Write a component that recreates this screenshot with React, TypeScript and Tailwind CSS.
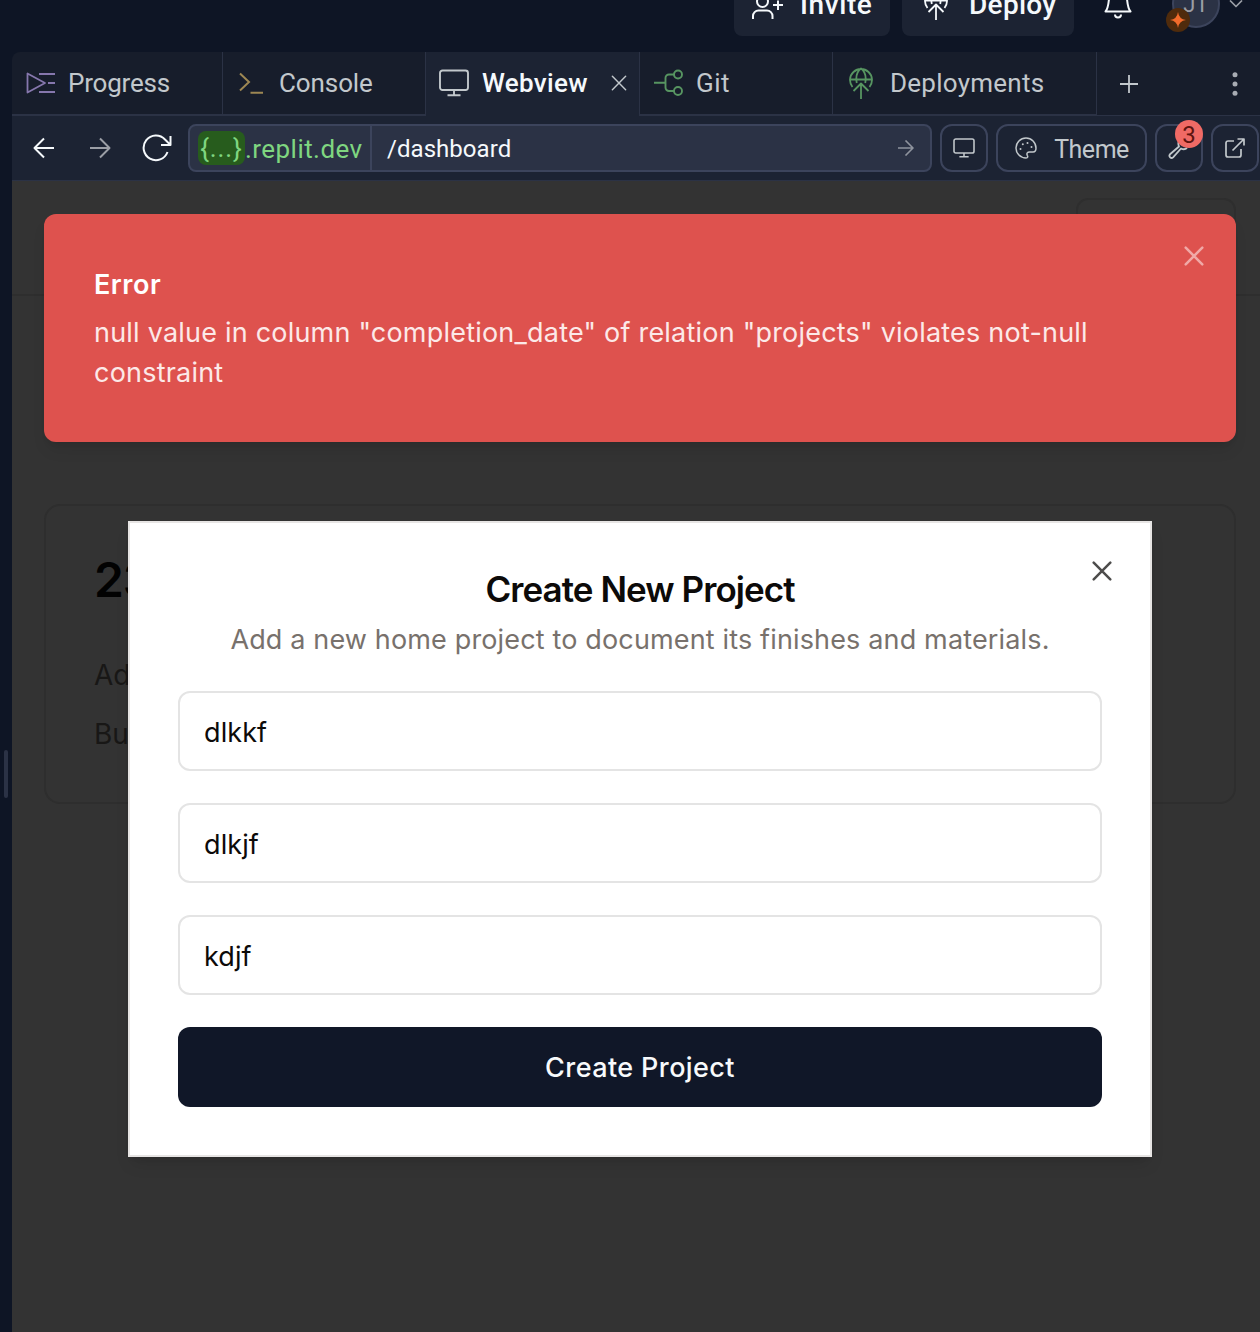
import type { ReactNode } from 'react';

const ui = "font-['Roboto','Liberation_Sans',sans-serif]";

function Svg({ className, box, sw = 2, children }: { className: string; box: string; sw?: number; children: ReactNode }) {
  return (
    <svg className={`shrink-0 ${className}`} viewBox={box} fill="none" stroke="currentColor" strokeWidth={sw} strokeLinejoin="round">
      {children}
    </svg>
  );
}

function DeployIcon({ className }: { className: string }) {
  return (
    <Svg className={className} box="0 0 24 32" sw={1.8}>
      <path d="M3.500 20A11 11 0 1 1 20.500 20M1 12.500h22M7.800 16C6.600 10 8 4.500 12 1.500c4 3 5.400 8.500 4.200 14.500M12 32V17.500M4.500 24l7.500-7.500 7.500 7.500" />
    </Svg>
  );
}

function MonitorIcon({ className, sw }: { className: string; sw?: number }) {
  return (
    <Svg className={className} box="0 0 30 28" sw={sw}>
      <rect x="1" y="1.500" width="28" height="19.500" rx="2.500" />
      <path d="M15 21v5M8.500 26.200h13" />
    </Svg>
  );
}

function Close({ className, sw = 2.5 }: { className: string; sw?: number }) {
  return (
    <Svg className={className} box="0 0 20 20" sw={sw}>
      <path strokeLinecap="round" d="M1.700 1.700l16.600 16.600M18.300 1.700l-16.600 16.600" />
    </Svg>
  );
}

function TopBar() {
  return (
    <header className="flex h-[52px] items-start justify-end overflow-hidden text-[#f5f9fc]">
      <div className="-mt-7 flex h-16 w-[156px] shrink-0 items-center rounded-lg bg-[#1c2333] pt-[2px] pl-[17px] text-[28px] font-medium">
        <Svg className="-mt-[2px] h-[32px] w-[32px]" box="0 0 32 32">
          <circle cx="11.500" cy="13.500" r="5.500" />
          <path d="M2 31v-3a5.500 5.500 0 0 1 5.500-5.500h8.500a5.500 5.500 0 0 1 5.500 5.500V31M27 12.500v9.500M22 17h10" />
        </Svg>
        <span className="ml-[17px] tracking-[0.600px]">Invite</span>
      </div>
      <div className="-mt-7 ml-3 flex h-16 w-[172px] shrink-0 items-center rounded-lg bg-[#1c2333] pt-[2px] pl-[22px] text-[28px] font-medium">
        <DeployIcon className="-mt-[2px] h-[32px] w-[24px]" />
        <span className="ml-[21px] tracking-[0.300px]">Deploy</span>
      </div>
      <Svg className="-mt-[10px] ml-[30px] h-[30px] w-7" box="0 0 28 30">
        <path d="M1.500 21.500C4 19 4.500 14 5 9a9 9 0 0 1 18 0c.5 5 1 10 3.500 12.500zM11 24.500a3 3 0 0 0 6 0" />
      </Svg>
      <div className="relative -mt-5 ml-10 flex size-12 shrink-0 items-center justify-center rounded-full border-2 border-[#3c445c] bg-[#2b3245] text-[22px] text-[#9b9ea6]">
        JT
        <span className="absolute -bottom-[6px] -left-2 flex size-6 items-center justify-center rounded-full bg-[#4f2b0c] text-[#f26b2b]">
          <svg className="size-4" viewBox="0 0 16 16" fill="currentColor">
            <path d="M8 0Q8.900 7.100 16 8Q8.900 8.900 8 16Q7.100 8.900 0 8Q7.100 7.100 8 0Z" />
          </svg>
        </span>
      </div>
      <Svg className="mr-[17px] ml-[9px] h-2 w-[14px]" box="0 0 14 8" sw={1.700}>
        <path d="M1 .5l6 6 6-6" stroke="#9b9ea6" />
      </Svg>
    </header>
  );
}

function TabBar() {
  const tab = 'flex shrink-0 items-center border-r border-[#2b3245] border-b-2 pb-0';
  return (
    <nav className="flex h-16 overflow-hidden rounded-tl-lg bg-[#171d2b] text-[26px] text-[#c2c8cc]">
      <div className={`${tab} w-[211px] pl-[14px]`}>
        <Svg className="h-[22px] w-[29px] text-[#8677ad]" box="0 0 29 22" sw={1.800}>
          <path d="M1.500 1.500v19L19 11zM13 2h16M22 11h7M13 20h16" />
        </Svg>
        <span className="ml-[13px] pt-px tracking-[-0.200px]">Progress</span>
      </div>
      <div className={`${tab} w-[203px] pl-4`}>
        <Svg className="h-[22px] w-6 text-[#9d8753]" box="0 0 24 22">
          <path strokeLinejoin="miter" d="M1 1.500l9 8.500-9 8.500M11.500 20.800H24" />
        </Svg>
        <span className="ml-4 pt-px tracking-[-0.100px]">Console</span>
      </div>
      <div className="flex w-[214px] shrink-0 items-center border-r border-[#2b3245] bg-[#1c2333] pb-0.5 pl-[13px]">
        <MonitorIcon className="h-7 w-[30px] text-[#c2c8cc]" sw={1.900} />
        <span className="ml-[13px] pt-px font-medium tracking-[0.300px] text-[#f5f9fc]">Webview</span>
        <Close className="ml-auto mr-3 size-4" sw={1.800} />
      </div>
      <div className={`${tab} w-[193px] pl-[14px]`}>
        <Svg className="h-7 w-[29px] text-[#579561]" box="0 0 29 28" sw={1.900}>
          <circle cx="24" cy="5.500" r="4" />
          <circle cx="24" cy="22" r="4" />
          <path d="M0 13.700h11.500M20 5.500h-5a3.500 3.500 0 0 0-3.500 3.500v9.500a3.500 3.500 0 0 0 3.500 3.500h5" />
        </Svg>
        <span className="ml-[13px] pt-px tracking-[0.500px]">Git</span>
      </div>
      <div className={`${tab} w-[264px] pl-4`}>
        <DeployIcon className="h-8 w-6 text-[#579561]" />
        <span className="ml-[17px] pt-px tracking-[0.250px]">Deployments</span>
      </div>
      <div className="flex flex-1 items-center justify-between border-b border-[#2b3245] pr-[22px] pl-[23px]">
        <Svg className="size-[18px]" box="0 0 18 18" sw={1.800}>
          <path d="M9 0v18M0 9h18" />
        </Svg>
        <svg className="h-6 w-[6px]" viewBox="0 0 6 24" fill="#a8acb3">
          <circle cx="3" cy="2.800" r="2.500" />
          <circle cx="3" cy="12" r="2.500" />
          <circle cx="3" cy="21.200" r="2.500" />
        </svg>
      </div>
    </nav>
  );
}

function Toolbar() {
  const btn = 'relative flex h-12 shrink-0 items-center justify-center rounded-xl border-2 border-[#3c445c] text-[#c2c8cc]';
  return (
    <div className="flex h-[65px] items-start border-b border-[#2b3245] bg-[#1c2333] pt-2 pl-5">
      <div className="flex h-12 w-[156px] shrink-0 items-center text-[#f5f9fc]">
        <Svg className="h-[22px] w-[22px]" box="0 0 22 22" sw={2}>
          <path d="M22 11H2.500M12 1.500L2.500 11l9.500 9.500" />
        </Svg>
        <Svg className="ml-[36px] h-[22px] w-[22px] text-[#9b9ea6]" box="0 0 22 22" sw={2}>
          <path d="M0 11h19.500M10 1.500l9.500 9.500-9.500 9.500" />
        </Svg>
        <Svg className="ml-[30px] h-[28px] w-[30px]" box="0 0 30 28" sw={2}>
          <path d="M25.500 18A12.300 12.300 0 1 1 23 5.500l5.500 5.500M28.500 2v9h-9.500" />
        </Svg>
      </div>
      <div className="flex h-12 w-[744px] shrink-0 items-center rounded-lg border-2 border-[#3c445c] bg-[#2b3245] text-[26px] text-[#f5f9fc]">
        <div className="flex h-full w-[182px] items-center border-r-2 border-[#3c445c] pl-2 text-[#7fd680]">
          <span className="flex h-[34px] w-[47px] items-center justify-center rounded-lg bg-[#275c1d] pt-px tracking-[0.900px]">{'{...}'}</span>
          <span className="pt-0.5 tracking-[0.450px]">.replit.dev</span>
        </div>
        <span className="ml-[15px] pt-0.5 text-[24px] tracking-[0.050px]">/dashboard</span>
        <Svg className="mr-4 ml-auto size-4 text-[#8f949e]" box="0 0 16 16" sw={1.600}>
          <path d="M0 8h15M7.500.5L15 8l-7.500 7.500" />
        </Svg>
      </div>
      <div className={`${btn} ml-2 w-12`}>
        <MonitorIcon className="h-5 w-[22px]" sw={2.200} />
      </div>
      <div className={`${btn} ml-2 w-[151px] pl-px text-[25px]`}>
        <Svg className="mr-[17px] size-[22px]" box="0 0 22 22" sw={1.500}>
          <path d="M11 1a10 10 0 0 0 0 20c2 0 2-1.500 1.300-2.700-1-2 .2-3.300 2.200-3.300H18c2 0 3-2 3-4A10 10 0 0 0 11 1z" />
          <g fill="currentColor" stroke="none">
            <circle cx="5.500" cy="12" r="1" />
            <circle cx="7.800" cy="7.300" r="1" />
            <circle cx="12.500" cy="6" r="1" />
            <circle cx="16.500" cy="10" r="1" />
          </g>
        </Svg>
        <span className="pt-[3px] tracking-[-0.500px]">Theme</span>
      </div>
      <div className={`${btn} ml-2 w-12`}>
        <Svg className="size-[22px]" box="0 0 22 22" sw={1.800}>
          <path d="M13.500 1.500a6 6 0 0 0-2.500 8L2 17.300a2.200 2.200 0 0 0 3.100 3.100L13 11.500c2 1 4.500.8 6-.5" />
        </Svg>
        <span className="absolute -top-[6px] right-[-2px] flex size-7 items-center justify-center rounded-full bg-[#f06a65] pt-px text-[24px] text-[#5e1410]">3</span>
      </div>
      <div className={`${btn} ml-2 w-12`}>
        <Svg className="size-5" box="0 0 20 20" sw={1.700}>
          <path d="M9 3H3a2 2 0 0 0-2 2v12a2 2 0 0 0 2 2h11a2 2 0 0 0 2-2v-6M12.500 1H19v6.500M19 1L7.500 12.500" />
        </Svg>
      </div>
    </div>
  );
}

function Toast() {
  return (
    <div className="absolute top-[33px] right-6 left-8 z-20 flex h-[228px] flex-col rounded-xl bg-[#de524e] pt-[50px] pl-[50px] text-[27px] leading-10 text-[#fce9e8] shadow-lg">
      <h2 className="pt-px font-semibold tracking-[0.500px] text-white">Error</h2>
      <p className="mt-2 w-[1030px] tracking-[0.210px]">
        null value in column "completion_date" of relation "projects" violates not-null constraint
      </p>
      <Close className="absolute top-8 right-8 size-5 text-[#f0a9a7]" />
    </div>
  );
}

function Dialog() {
  const field = 'h-20 w-full rounded-xl border-2 border-[#e4e4e4] bg-white px-6 pt-0.5 text-[27px] tracking-[0.100px] text-[#0c0a09]';
  return (
    <div className="absolute top-[340px] left-[116px] z-10 flex h-[636px] w-[1024px] flex-col border-2 border-[#e7e5e4] bg-white px-12 pt-12 shadow-lg">
      <h1 className="text-center text-[35px] leading-9 font-semibold tracking-[-0.940px] text-[#0c0a09]">Create New Project</h1>
      <p className="mt-[13px] mb-[31px] text-center text-[27px] leading-10 tracking-[0.150px] text-[#78716c]">
        Add a new home project to document its finishes and materials.
      </p>
      <div className="flex flex-col gap-8">
        <input className={field} defaultValue="dlkkf" />
        <input className={field} defaultValue="dlkjf" />
        <input className={field} defaultValue="kdjf" />
        <button className="h-20 rounded-xl bg-[#101728] pt-0.5 text-[27px] font-medium tracking-[0.400px] text-[#f8fafc]">Create Project</button>
      </div>
      <Close className="absolute top-[38px] right-[38px] size-5 text-[#4d4c4b]" />
    </div>
  );
}

function WebPage() {
  return (
    <main className="relative flex-1 overflow-hidden bg-[#333333] font-['Inter','Liberation_Sans',sans-serif]">
      <div className="flex h-[115px] justify-end border-b-2 border-[#2e2e2e] pt-[17px] pr-6">
        <div className="h-20 w-[160px] rounded-xl border-2 border-[#2e2e2e]" />
      </div>
      <section className="mt-[208px] mr-6 ml-8 h-[300px] rounded-[16px] border-2 border-[#2e2e2e] pt-[50px] pl-12 text-[28px] text-[#181716]">
        <h2 className="text-[48px] leading-[48px] font-semibold tracking-[-1.200px] text-[#020202]">23</h2>
        <p className="mt-[51px] leading-10">Address</p>
        <p className="mt-[19px] leading-10">Builder</p>
      </section>
      <Toast />
      <Dialog />
    </main>
  );
}

export default function App() {
  return (
    <div className={`flex h-[1332px] w-[1260px] flex-col overflow-hidden bg-[#0e1525] ${ui}`}>
      <TopBar />
      <div className="flex min-h-0 flex-1">
        <aside className="w-3 shrink-0 pt-[698px] pl-1">
          <div className="h-12 w-1 rounded-full bg-[#2b3245]" />
        </aside>
        <div className="flex w-[1248px] shrink-0 flex-col">
          <TabBar />
          <Toolbar />
          <WebPage />
        </div>
      </div>
    </div>
  );
}
